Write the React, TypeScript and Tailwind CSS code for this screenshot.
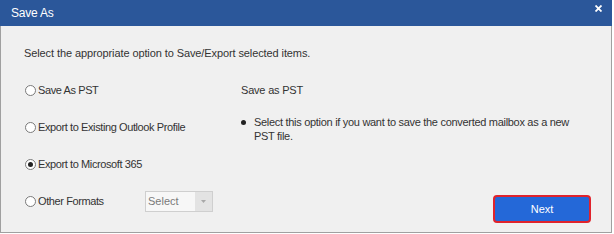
import React from "react"

const options = [
  { label: "Save As PST", checked: false },
  { label: "Export to Existing Outlook Profile", checked: false },
  { label: "Export to Microsoft 365", checked: true },
]

function Radio({ checked }: { checked: boolean }) {
  return (
    <span className="ml-[1px] flex h-[11px] w-[11px] shrink-0 items-center justify-center rounded-full border border-[#7a7a7a] bg-white">
      {checked && <span className="h-[5px] w-[5px] rounded-full bg-[#222]" />}
    </span>
  )
}

export default function App() {
  return (
    <div className="flex h-[233px] w-[612px] flex-col border border-t-0 border-[#a0a0a0] bg-[#f0f0f0] font-['Liberation_Sans',Arial,sans-serif] text-[11px] text-[#333]">
      {/* Title bar */}
      <div className="-mx-px flex h-[26px] justify-between bg-[#2b579a] pl-[11px] pr-[10px] text-white">
        <span className="self-center text-[12px] tracking-[-0.2px]">Save As</span>
        <svg className="mt-[5px]" width="7" height="7" viewBox="0 0 7 7">
          <path d="M0.5 0.5 L6.5 6.5 M6.5 0.5 L0.5 6.5" stroke="white" strokeWidth="1.8" />
        </svg>
      </div>

      {/* Body */}
      <div className="flex flex-1 flex-col pb-[9px] pl-[23px] pr-[20px] pt-[20px]">
        <p className="leading-[14px] tracking-[-0.1px]">Select the appropriate option to Save/Export selected items.</p>

        <div className="mt-[20px] flex flex-1">
          {/* Options */}
          <div className="flex w-[217px] flex-col gap-[17px] tracking-[-0.4px]">
            {options.map((o) => (
              <div key={o.label} className="flex h-5 items-center gap-[2px]">
                <Radio checked={o.checked} />
                <span>{o.label}</span>
              </div>
            ))}
            <div className="flex h-[21px] items-center gap-[2px]">
              <Radio checked={false} />
              <span className="w-[105px]">Other Formats</span>
              <div className="flex h-[21px] w-[68px] border border-[#cfcfcf] bg-[#f7f7f7] tracking-normal">
                <span className="flex-1 self-center pl-[2px] text-[#7a7a7a]">Select</span>
                <span className="flex w-[17px] items-center justify-center bg-[#e3e3e3]">
                  <svg width="5" height="3" viewBox="0 0 5 3">
                    <path d="M0 0 H5 L2.5 3 Z" fill="#a8a8a8" />
                  </svg>
                </span>
              </div>
            </div>
          </div>

          {/* Description */}
          <div className="flex flex-1 flex-col">
            <div className="flex h-5 items-center tracking-[-0.2px]">Save as PST</div>
            <div className="mt-[15px] flex leading-[14px] tracking-[-0.3px]">
              <span className="flex h-[14px] w-[13px] shrink-0 items-center">
                <span className="h-[5px] w-[5px] rounded-full bg-[#222]" />
              </span>
              <p className="w-[325px]">
                Select this option if you want to save the converted mailbox as a new PST file.
              </p>
            </div>
            <button className="mt-auto flex h-[28px] w-[98px] items-center justify-center self-end rounded-[4px] border-2 border-[#e0232c] bg-[#2468d8] text-[11px] text-white">
              Next
            </button>
          </div>
        </div>
      </div>
    </div>
  )
}
